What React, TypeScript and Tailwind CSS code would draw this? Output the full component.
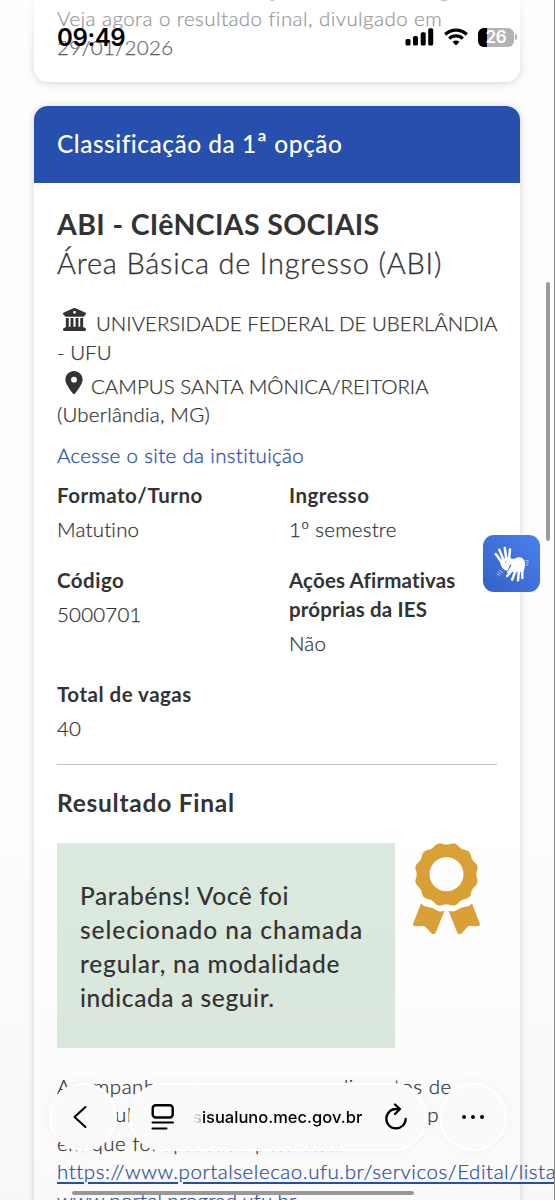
import type { ReactNode } from 'react'
import { FaBuildingColumns, FaLocationDot } from 'react-icons/fa6'

interface FieldProps {
    label: ReactNode
    value: string
    labelClass?: string
}

function Field({ label, value, labelClass = 'tracking-[0.5px]' }: FieldProps) {
    return (
        <div className="mb-[22.5px]">
            <h4 className={`font-bold ${labelClass}`}>{label}</h4>
            <p className="mt-[5.5px] font-light tracking-[0.2px] [-webkit-text-stroke:0.25px]">{value}</p>
        </div>
    )
}

// Scalloped edge of the medal: 12 lobes around the centre
const medalEdge = Array.from({ length: 181 }, (_, i) => {
    const angle = (i * 2 * Math.PI) / 180
    const radius = 30.9 - 1.1 * Math.cos(12 * angle)
    return `${(34.5 + radius * Math.sin(angle)).toFixed(2)},${(31.5 - radius * Math.cos(angle)).toFixed(2)}`
}).join('L')

function Medal() {
    return (
        <svg className="ml-[17px] shrink-0" width="69" height="92" viewBox="0 0 69 92" fill="#d9a136">
            <path fillRule="evenodd" d={`M${medalEdge}ZM34.5 14.3a17 17 0 1 0 0 34a17 17 0 1 0 0-34Z`} />
            <path d="M9 60.5L1.2 80.5Q0.4 83.2 3.2 83.3L12.5 83L19 90Q22 92.6 23.8 89.5L32.5 67.8Q27.5 69.6 23 66.5Q20 63.8 16 64Q11.5 63.6 9 60.5Z" />
            <path d="M60 60.5L67.8 80.5Q68.6 83.2 65.8 83.3L56.5 83L50 90Q47 92.6 45.2 89.5L36.5 67.8Q41.5 69.6 46 66.5Q49 63.8 53 64Q57.5 63.6 60 60.5Z" />
        </svg>
    )
}

function StatusBar() {
    return (
        <div className="absolute inset-x-0 top-0 flex h-[74px] items-center justify-between bg-linear-to-b from-white/65 via-white/35 to-white/0 pl-[57px] pr-[38px] text-black">
            <span className="pt-px font-[Inter,sans-serif] text-[24px] font-semibold leading-none tracking-[-0.4px]">09:49</span>
            <div className="flex items-center">
                <svg width="29" height="18" viewBox="0 0 29 18">
                    <rect x="0.5" y="11" width="5" height="6.5" rx="1.5" />
                    <rect x="8" y="8" width="5" height="9.5" rx="1.5" />
                    <rect x="15.7" y="4.3" width="5" height="13.2" rx="1.5" />
                    <rect x="23.2" y="0.3" width="5" height="17.2" rx="1.5" />
                </svg>
                <svg className="ml-[10px]" width="24" height="18" viewBox="0 0 24 18" fill="none" stroke="#000" strokeWidth="3.2">
                    <path d="M1.2 6.5a15.4 15.4 0 0 1 21.6 0" />
                    <path d="M5.2 10.7a9.7 9.7 0 0 1 13.6 0" />
                    <path d="M12 17.4l-3.4-3.5a4.9 4.9 0 0 1 6.8 0z" fill="#000" stroke="none" />
                </svg>
                <div className="relative ml-[10px] flex h-[19px] w-[36px] items-center justify-center overflow-hidden rounded-[6px] bg-[#b3b3b3]">
                    <div className="absolute inset-y-0 left-0 w-[9px] bg-black" />
                    <span className="relative font-[Inter,sans-serif] text-[17px] font-semibold leading-none tracking-[-0.3px] text-white">26</span>
                </div>
                <div className="ml-px h-[6px] w-[2px] rounded-r-full bg-[#b3b3b3]" />
            </div>
        </div>
    )
}

function SignLanguageButton() {
    return (
        <button className="absolute left-[483px] top-[535px] flex size-[57px] items-center justify-center rounded-[11px] bg-linear-to-tr from-[#3560c9] to-[#4a80ea]">
            <svg className="-ml-px" width="36" height="38" viewBox="0 0 36 38" fill="none" stroke="#fff" strokeLinecap="round" strokeLinejoin="round">
                {/* left hand */}
                <path d="M8.5 17L2.8 9M10.5 15L6.3 4.8M13.3 14L11.8 3M16 14L17 4.4" strokeWidth="2.5" />
                <path d="M7.5 15.5L16.8 12.5L17.5 14L12 16L11 18.5L17 18.5L14 25L12 24.5Q8 21.5 7.5 15.5Z" fill="#fff" strokeWidth="1.5" />
                {/* right hand */}
                <path d="M20 24L14.2 31M22.5 26L19.2 34.5M25.8 26.5L25 35.5M29 24L29.4 33" strokeWidth="2.5" />
                <path d="M13.5 17Q17 14 22 14Q28 11 31 16Q32 21 30 26.5L20 26.5L16.5 27L14.5 27.5Q18 23 19.5 19.5Q17 19 13.5 17Z" fill="#fff" strokeWidth="1.2" />
                <path d="M33 15.5h2.2M33 17.8h2.2M33 20h2M5 26.8l3 2.6M6.8 25.2l3 2.6M4 28.8l2.4 2" strokeWidth="0.8" opacity="0.75" />
            </svg>
        </button>
    )
}

function BrowserBar() {
    const glass = 'border-2 border-white bg-[#fafafa]/96 shadow-[0_0_14px_rgba(0,0,0,0.04)] backdrop-blur-[3px]'

    return (
        <div className="absolute left-[49px] top-[1083px] flex h-[68px] w-[458px] items-center justify-between text-black">
            <button className={`flex size-[68px] items-center justify-center rounded-full ${glass}`}>
                <svg width="14" height="24" viewBox="0 0 14 24" fill="none" stroke="#000" strokeWidth="2" strokeLinecap="round" strokeLinejoin="round" className="-ml-1.5">
                    <path d="M12.5 2L1.5 12l11 10" />
                </svg>
            </button>
            <div className={`flex h-[68px] w-[298px] items-center rounded-full pl-[20px] pr-[17px] ${glass}`}>
                <svg width="24" height="28" viewBox="0 0 24 28" fill="none" stroke="#000" strokeWidth="2.4" strokeLinecap="round">
                    <rect x="1.7" y="2.2" width="20" height="12.3" rx="3" />
                    <path d="M1.5 19.5h20.5M1.5 25.5h14" strokeWidth="2" />
                </svg>
                <span className="ml-[18px] flex-1 whitespace-nowrap font-[Inter,sans-serif] text-[16.5px] font-medium">
                    <span className="bg-linear-to-r from-transparent to-neutral-400 bg-clip-text text-transparent">s</span>isualuno.mec.gov.br
                </span>
                <svg width="24" height="28" viewBox="0 0 24 28" fill="none" stroke="#000" strokeWidth="2.3" strokeLinecap="round" strokeLinejoin="round">
                    <path d="M14.5 6H12A9.7 9.7 0 1 0 21.7 16" />
                    <path d="M11 1.5l5 4.5-5 5" />
                </svg>
            </div>
            <button className={`flex size-[68px] items-center justify-center gap-[4.5px] rounded-full ${glass}`}>
                <i className="size-[4.5px] rounded-full bg-black" />
                <i className="size-[4.5px] rounded-full bg-black" />
                <i className="size-[4.5px] rounded-full bg-black" />
            </button>
        </div>
    )
}

export default function App() {
    return (
        <div className="relative h-[1200px] w-full overflow-hidden bg-[#fdfdfd] font-[Lato,sans-serif] text-[20.5px] leading-[28.5px] text-[#333]">
            <main className="flex flex-col gap-[24px] pl-[34px] pr-[35px]">
                {/* Previous card */}
                <section className="flex h-[82px] flex-col justify-end rounded-b-[14px] bg-white px-[23px] pb-[21px] font-light tracking-[0.45px] shadow-[0_1px_8px_rgba(0,0,0,0.16)] [-webkit-text-stroke:0.25px]">
                    <p className="whitespace-nowrap">Confira a sua classificação na chamada regular.</p>
                    <p className="whitespace-nowrap">Veja agora o resultado final, divulgado em</p>
                    <p className="tracking-[0.35px]">29/01/2026</p>
                </section>

                {/* Result card */}
                <section className="h-[1150px] rounded-t-[14px] bg-white shadow-[0_1px_8px_rgba(0,0,0,0.16)]">
                    <header className="h-[77px] whitespace-nowrap rounded-t-[14px] bg-[#264fae] px-[23px] text-[24.5px] font-medium leading-[75px] tracking-[0.5px] text-white">
                        Classificação da 1<span className="text-[28px] leading-none">ª</span> opção
                    </header>
                    <div className="px-[23px] pt-[22px]">
                        <h2 className="whitespace-nowrap text-[28.5px] font-bold leading-[38.5px] tracking-[0.36px]">ABI - CIêNCIAS SOCIAIS</h2>
                        <p className="whitespace-nowrap text-[29px] font-light leading-[38.5px] tracking-[0.8px] [-webkit-text-stroke:0.3px]">Área Básica de Ingresso (ABI)</p>

                        <div className="mt-[21.5px] whitespace-nowrap font-light [-webkit-text-stroke:0.25px]">
                            <div className="flex h-[34px] items-end">
                                <FaBuildingColumns className="mb-[6.5px] ml-[6px] mr-[10px] size-[23px] shrink-0" />
                                <span className="tracking-[-0.03px]">UNIVERSIDADE FEDERAL DE UBERLÂNDIA</span>
                            </div>
                            <p>- UFU</p>
                            <div className="flex h-[34px] items-end">
                                <FaLocationDot className="mb-[6.5px] ml-[8px] mr-[8px] h-[23px] w-[18px] shrink-0" />
                                <span>CAMPUS SANTA MÔNICA/REITORIA</span>
                            </div>
                            <p className="tracking-[0.2px]">(Uberlândia, MG)</p>
                        </div>
                        <a className="mt-[12px] block font-light tracking-[0.35px] text-[#2b4fa8] [-webkit-text-stroke:0.3px]">Acesse o site da instituição</a>

                        <div className="mt-[12px] grid grid-cols-[232px_1fr]">
                            <Field label="Formato/Turno" value="Matutino" />
                            <Field label="Ingresso" value="1º semestre" />
                            <Field label="Código" value="5000701" />
                            <Field label={<>Ações Afirmativas<br />próprias da IES</>} value="Não" labelClass="tracking-[0.15px]" />
                            <Field label="Total de vagas" value="40" />
                        </div>

                        <hr className="-mt-px border-t-[1.5px] border-[#c4c4c4]" />
                        <h3 className="mt-[21px] text-[24.5px] font-bold leading-[34px] tracking-[0.75px]">Resultado Final</h3>

                        <div className="mt-[23px] flex items-start">
                            <div className="h-[205px] w-[338px] shrink-0 bg-[#dce9de] px-[23px] pt-[36px]">
                                <p className="whitespace-nowrap text-[24.5px] font-medium leading-[34.2px] tracking-[0.95px]">
                                    <span className="tracking-[0.6px]">Parabéns! Você foi</span><br />
                                    selecionado na chamada<br />
                                    <span className="tracking-[0.8px]">regular, na modalidade</span><br />
                                    <span className="tracking-[0.6px]">indicada a seguir.</span>
                                </p>
                            </div>
                            <Medal />
                        </div>

                        <p className="mt-[24px] whitespace-nowrap font-light tracking-[0.55px] [-webkit-text-stroke:0.25px]">
                            Acompanhe os prazos e procedimentos de<br />
                            matrícula na página da instituição, feita pelo<br />
                            em que foi aprovado pelo Sisu:<br />
                            <a className="text-[#2b4fa8] underline decoration-[1.5px] underline-offset-[3px]">https://www.portalselecao.ufu.br/servicos/Edital/listar</a><br />
                            <a className="tracking-[0.25px] text-[#2b4fa8] underline decoration-[1.5px] underline-offset-[3px]">www.portal.prograd.ufu.br</a>
                        </p>
                    </div>
                </section>
            </main>

            <div className="pointer-events-none absolute inset-x-0 bottom-0 h-[400px] bg-linear-to-b from-black/0 to-black/[0.02]" />
            <StatusBar />
            <SignLanguageButton />
            <BrowserBar />

            {/* Scroll indicators */}
            <div className="absolute left-[546px] top-[282px] h-[259px] w-[4px] rounded-full bg-[#9b9b9b]" />
            <div className="absolute left-[72px] top-[1191px] h-[4px] w-[342px] rounded-full bg-[#989898]" />
            <div className="absolute inset-y-0 right-0 w-px bg-[#8a8a8a]" />
        </div>
    )
}
